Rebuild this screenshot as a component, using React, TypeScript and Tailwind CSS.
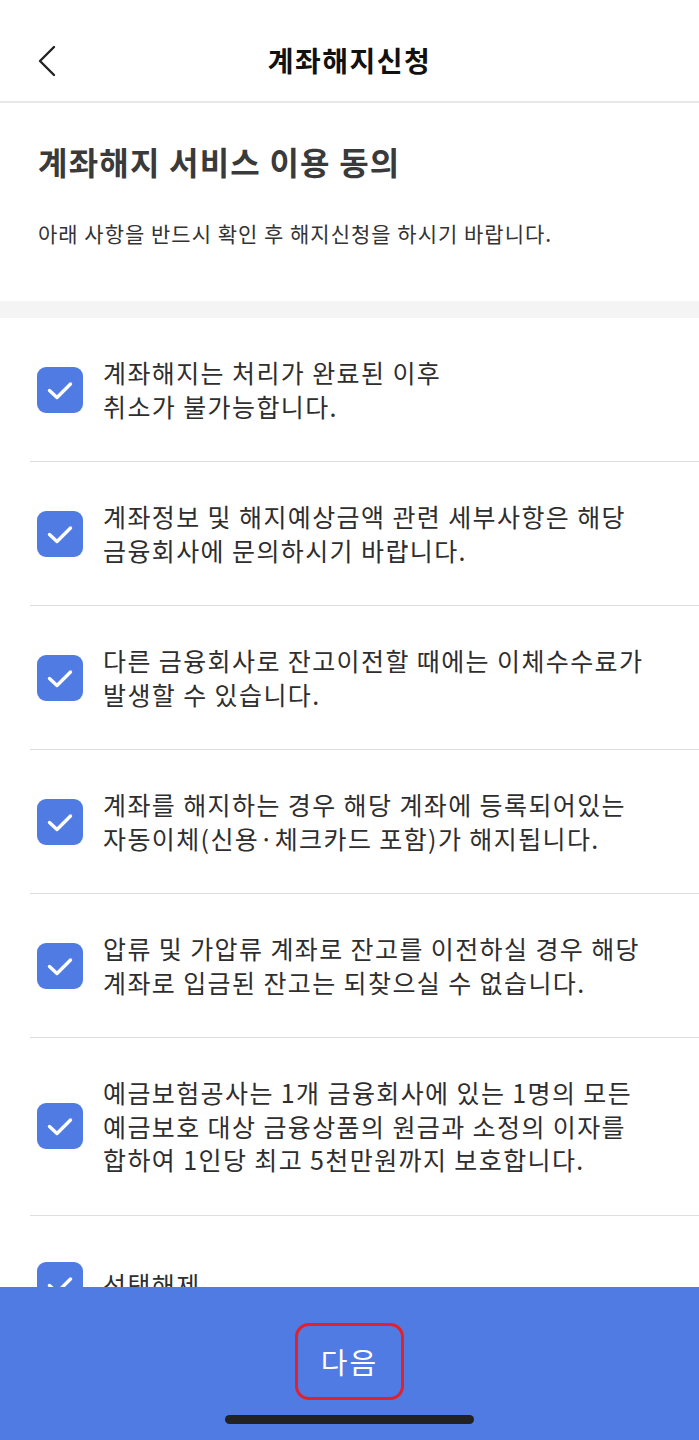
import { useState } from 'react';

const FONT = { fontFamily: '"Noto Sans CJK KR", "Noto Sans", sans-serif' };

const TERMS = [
    ['계좌해지는 처리가 완료된 이후', '취소가 불가능합니다.'],
    ['계좌정보 및 해지예상금액 관련 세부사항은 해당', '금융회사에 문의하시기 바랍니다.'],
    ['다른 금융회사로 잔고이전할 때에는 이체수수료가', '발생할 수 있습니다.'],
    ['계좌를 해지하는 경우 해당 계좌에 등록되어있는', '자동이체(신용·체크카드 포함)가 해지됩니다.'],
    ['압류 및 가압류 계좌로 잔고를 이전하실 경우 해당', '계좌로 입금된 잔고는 되찾으실 수 없습니다.'],
    [
        '예금보험공사는 1개 금융회사에 있는 1명의 모든',
        '예금보호 대상 금융상품의 원금과 소정의 이자를',
        '합하여 1인당 최고 5천만원까지 보호합니다.',
    ],
];

const CheckBox = ({ checked, onToggle }: { checked: boolean; onToggle: () => void }) => (
    <button
        onClick={onToggle}
        className={`shrink-0 w-[46px] h-[46px] rounded-[9px] flex items-center justify-center ${
            checked ? 'bg-[#4f7be3]' : 'bg-white border-2 border-[#cfd4dc]'
        }`}
    >
        {checked && (
            <svg width="46" height="46" viewBox="0 0 46 46" fill="none">
                <path
                    d="M12.5 23.5L20 30.5L33.5 17"
                    stroke="#fff"
                    strokeWidth="3.4"
                    strokeLinecap="round"
                    strokeLinejoin="round"
                />
            </svg>
        )}
    </button>
);

export default function App() {
    const [checks, setChecks] = useState<boolean[]>(TERMS.map(() => true));
    const allChecked = checks.every(Boolean);

    const toggle = (i: number) => setChecks((prev) => prev.map((c, j) => (j === i ? !c : c)));
    const toggleAll = () => setChecks(TERMS.map(() => !allChecked));

    return (
        <div className="w-full h-[1440px] flex flex-col overflow-hidden bg-white" style={FONT}>
            {/* 상단 헤더 */}
            <header className="shrink-0 h-[103px] relative flex items-center justify-center pt-[18px] border-b-2 border-[#e8e8e8]">
                <button className="absolute left-[36px] top-[44px]">
                    <svg width="24" height="34" viewBox="0 0 24 34" fill="none">
                        <path
                            d="M18 3L4 17L18 31"
                            stroke="#222"
                            strokeWidth="2.4"
                            strokeLinecap="round"
                            strokeLinejoin="round"
                        />
                    </svg>
                </button>
                <h1 className="text-[28px] font-bold text-[#111] leading-none tracking-[1.5px]">계좌해지신청</h1>
            </header>

            <main className="flex-1 overflow-hidden">
                <section className="px-[38px] pt-[38px] pb-[54px]">
                    <h2 className="text-[32px] font-bold text-[#3a3a3a] leading-[40px] tracking-[1.2px]">
                        계좌해지 서비스 이용 동의
                    </h2>
                    <p className="mt-[38px] text-[21px] text-[#333] leading-[28px] tracking-[1px]">
                        아래 사항을 반드시 확인 후 해지신청을 하시기 바랍니다.
                    </p>
                </section>

                <div className="h-[17px] bg-[#f4f4f4]" />

                <ul>
                    {TERMS.map((lines, i) => (
                        <li key={i}>
                            <div className="flex items-center gap-[20px] pl-[37px] pr-[10px] py-[38px]">
                                <CheckBox checked={checks[i]} onToggle={() => toggle(i)} />
                                <p className="text-[25px] text-[#2e2e2e] leading-[33.5px] tracking-[1.4px]">
                                    {lines.map((line) => (
                                        <span key={line} className="block whitespace-nowrap">
                                            {line}
                                        </span>
                                    ))}
                                </p>
                            </div>
                            <div className="ml-[30px] h-[1px] bg-[#dedede]" />
                        </li>
                    ))}
                    <li className="flex items-center gap-[20px] pl-[37px] pt-[46px] pb-[46px]">
                        <CheckBox checked={allChecked} onToggle={toggleAll} />
                        <span className="text-[25px] text-[#2e2e2e] leading-[33.5px] tracking-[1.4px]">선택해제</span>
                    </li>
                </ul>
            </main>

            {/* 하단 버튼 영역 */}
            <footer className="shrink-0 h-[153px] bg-[#4f7be3] flex flex-col items-center">
                <button className="mt-[36px] w-[109px] h-[77px] rounded-[14px] border-[3px] border-[#e3202b] flex items-center justify-center text-[29px] text-white leading-none tracking-[2px]">
                    다음
                </button>
                <div className="mt-auto mb-[16px] w-[249px] h-[9px] rounded-full bg-[#222]" />
            </footer>
        </div>
    );
}
